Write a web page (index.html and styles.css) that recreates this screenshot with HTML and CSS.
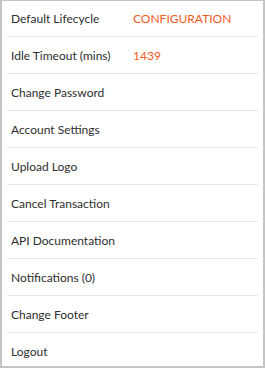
FILE: index.html
```html
<!DOCTYPE html>
<html lang="en">
<head>
    <meta charset="UTF-8">
    <meta name="viewport" content="width=device-width, initial-scale=1.0">
    <title>Settings</title>
    <link rel="stylesheet" href="styles.css">
</head>
<body>

    <div class="panel">
        <ul class="menu">
            <li class="row">
                <span class="label">Default Lifecycle</span>
                <span class="value">CONFIGURATION</span>
            </li>
            <li class="row">
                <span class="label">Idle Timeout (mins)</span>
                <span class="value">1439</span>
            </li>
            <li class="row"><span class="label">Change Password</span></li>
            <li class="row"><span class="label">Account Settings</span></li>
            <li class="row"><span class="label">Upload Logo</span></li>
            <li class="row"><span class="label">Cancel Transaction</span></li>
            <li class="row"><span class="label">API Documentation</span></li>
            <li class="row"><span class="label">Notifications (0)</span></li>
            <li class="row"><span class="label">Change Footer</span></li>
            <li class="row"><span class="label">Logout</span></li>
        </ul>
    </div>

</body>
</html>
```

FILE: styles.css
```css
html, body {
    margin: 0;
    padding: 0;
}

body {
    font-family: Lato, "Open Sans", sans-serif;
    background: white;
    color: #2e2e2e;
}

.panel {
    width: 265px;
    height: 368px;
    box-sizing: border-box;
    border: 2px solid #c4c4c4;
    border-top-width: 1px;
    overflow: hidden;
    background: white;
}

.menu {
    list-style: none;
    margin: 0;
    padding: 0 5px;
}

.row {
    display: flex;
    align-items: center;
    height: 36px;
    border-bottom: 1px solid #e6e6e6;
    padding-left: 4px;
    font-size: 12px;
}

.row:first-child {
    height: 35px;
}

.row:last-child {
    border-bottom: none;
}

.label {
    width: 122px;
}

.value {
    color: #f25a1c;
}
```
